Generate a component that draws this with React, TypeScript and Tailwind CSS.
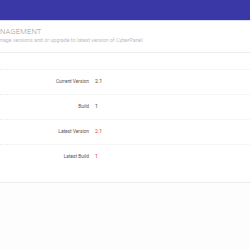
import React from 'react';

const rows = [
  { label: 'Current Version', value: '2.1', red: false },
  { label: 'Build', value: '1', red: false },
  { label: 'Latest Version', value: '2.1', red: true },
  { label: 'Latest Build', value: '1', red: true },
];

const App: React.FC = () => {
  return (
    <div className="w-[250px] h-[250px] overflow-hidden bg-[#fdfdfd]" style={{ fontFamily: 'Roboto, "Open Sans", sans-serif' }}>
      <header className="h-[21px] bg-[#3a38a6] border-b border-[#dcdcf0]" />
      <div className="bg-white border-b border-[#ececec] h-[32px] pt-[6px]">
        <h1 className="text-[7.5px] leading-[9px] font-light text-[#9a9a9a] tracking-[0.2px]">NAGEMENT</h1>
        <p className="text-[5.3px] leading-[6px] mt-[1px] text-[#bdbdbd]">nage versions and or upgrade to latest version of CyberPanel</p>
      </div>
      <div className="bg-white border-b border-[#ebebeb] pt-[16px] pb-[13px]">
        {rows.map((row) => (
          <div key={row.label} className="h-[25px] border-t border-dotted border-[#ececec] flex items-center">
            <div className="w-[89px] text-right text-[4.8px] text-[#555]">{row.label}</div>
            <div className={`ml-[6px] text-[5.2px] ${row.red ? 'text-[#e53935]' : 'text-[#444]'}`}>{row.value}</div>
          </div>
        ))}
      </div>
    </div>
  );
};

export default App;
